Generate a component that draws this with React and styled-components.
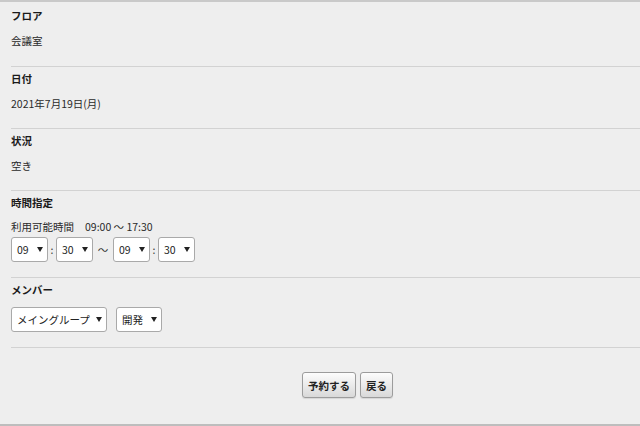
import React from "react";
import styled, { createGlobalStyle } from "styled-components";

const GlobalStyle = createGlobalStyle`
  html, body {
    margin: 0;
    padding: 0;
    background: #eeeeee;
  }
  body {
    font-family: "Noto Sans CJK JP", "Noto Sans", sans-serif;
    color: #222;
  }
`;

function Caret() {
  return (
    <svg width="6" height="5" viewBox="0 0 6 5">
      <path d="M0 0 L6 0 L3 5 Z" fill="#222" />
    </svg>
  );
}

function Select({ value, width }) {
  return (
    <SelectBox $width={width}>
      <span>{value}</span>
      <Caret />
    </SelectBox>
  );
}

function App() {
  return (
    <>
      <GlobalStyle />
      <Page>
        <Section $first>
          <Label>フロア</Label>
          <Value>会議室</Value>
        </Section>
        <Section>
          <Label>日付</Label>
          <Value>2021年7月19日(月)</Value>
        </Section>
        <Section>
          <Label>状況</Label>
          <Value>空き</Value>
        </Section>
        <Section $bottom={15}>
          <Label>時間指定</Label>
          <Value $top={10}>
            利用可能時間<Range>09:00 ～ 17:30</Range>
          </Value>
          <Row $top={3}>
            <Select value="09" width={37} />
            <Between $width={8}>:</Between>
            <Select value="30" width={37} />
            <Between $width={20}>～</Between>
            <Select value="09" width={37} />
            <Between $width={8}>:</Between>
            <Select value="30" width={37} />
          </Row>
        </Section>
        <Section $bottom={15}>
          <Label>メンバー</Label>
          <Row $top={10} $gap={9}>
            <Select value="メイングループ" width={96} />
            <Select value="開発" width={46} />
          </Row>
        </Section>
        <Actions>
          <Button>予約する</Button>
          <Button>戻る</Button>
        </Actions>
      </Page>
    </>
  );
}

const Page = styled.div`
  height: 426px;
  box-sizing: border-box;
  border-top: 2px solid #c9c9c9;
  border-bottom: 2px solid #bdbdbd;
  display: flex;
  flex-direction: column;
`;

const Section = styled.div`
  margin-left: 11px;
  padding: ${(p) => (p.$first ? "7px 0 18px" : `5px 0 ${p.$bottom || 17}px`)};
  border-bottom: 1px solid #d2d2d2;
`;

const Label = styled.div`
  font-size: 10.5px;
  line-height: 14px;
  font-weight: bold;
  color: #1a1a1a;
`;

const Value = styled.div`
  margin-top: ${(p) => p.$top || 11}px;
  font-size: 10.5px;
  line-height: 14px;
  color: #2a2a2a;
`;

const Range = styled.span`
  margin-left: 11px;
`;

const Row = styled.div`
  margin-top: ${(p) => p.$top}px;
  display: flex;
  align-items: center;
  gap: ${(p) => p.$gap || 0}px;
`;

const SelectBox = styled.div`
  width: ${(p) => p.$width}px;
  height: 25px;
  box-sizing: border-box;
  display: flex;
  align-items: center;
  justify-content: space-between;
  padding: 0 4px 0 5px;
  background: #fff;
  border: 1px solid #a9a9a9;
  border-radius: 3px;
  font-size: 10.5px;
  color: #222;
`;

const Between = styled.span`
  width: ${(p) => p.$width}px;
  text-align: center;
  font-size: 10.5px;
  color: #333;
`;

const Actions = styled.div`
  flex: 1;
  display: flex;
  justify-content: center;
  align-items: flex-start;
  gap: 4px;
  padding: 24px 0 0 55px;
`;

const Button = styled.button`
  height: 26px;
  padding: 0 5px;
  font-family: inherit;
  font-size: 10.5px;
  font-weight: bold;
  color: #222;
  background: linear-gradient(#fdfdfd, #d9d9d9);
  border: 1px solid #9c9c9c;
  border-radius: 3px;
  box-shadow: 0 1px 1px rgba(0, 0, 0, 0.1);
`;

export default App;
